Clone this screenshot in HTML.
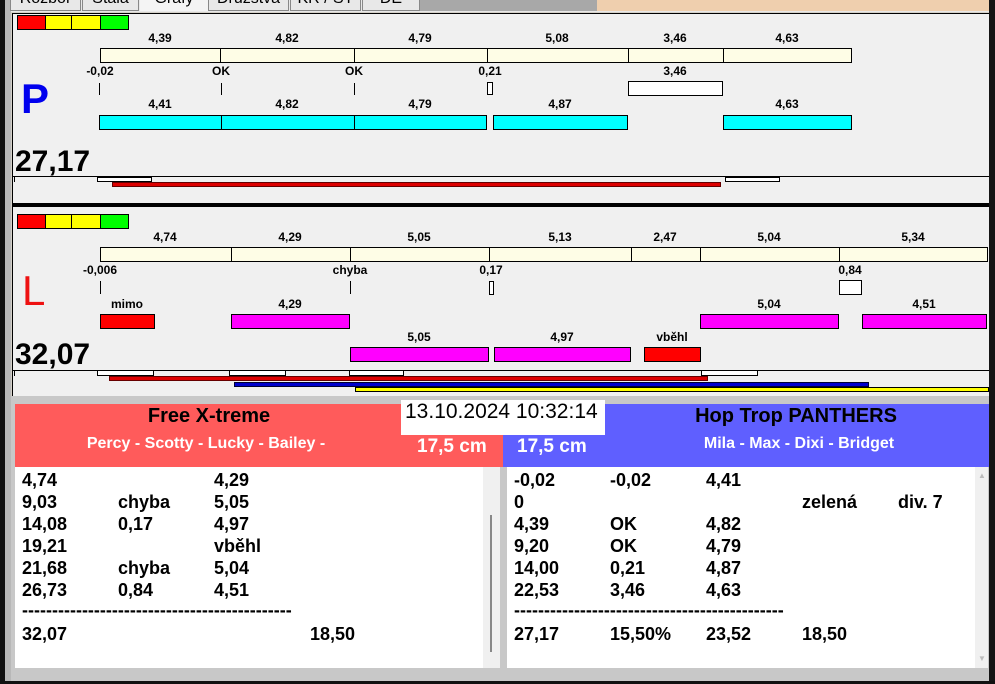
<!DOCTYPE html>
<html><head><meta charset="utf-8"><style>
*{margin:0;padding:0;box-sizing:border-box}
body{width:995px;height:684px;overflow:hidden;background:#d4d0c8;position:relative;font-family:"Liberation Sans",Arial,sans-serif;font-weight:bold}
div{position:absolute}
.t{font-size:12px;color:#000;text-align:center;width:80px;margin-left:-40px;line-height:14px}
.b{border:1px solid #000}
.y{background:#fefde6}
.c{background:#00ffff}
.m{background:#ff00ff}
.r{background:#ff0000}
.w{background:#fff}
.row{font-size:18px;line-height:22px;color:#000}
.tab{top:0;height:11px;background:#e8e8e8;border:1px solid #888;border-top:none;font-size:16px;font-weight:normal;overflow:hidden;text-align:center;line-height:10px}
</style></head><body>
<div style="left:0;top:0;width:5px;height:684px;background:#111"></div>
<div style="left:5px;top:0;width:6px;height:684px;background:#b8b8b8"></div>
<div style="left:989px;top:0;width:6px;height:684px;background:#151515"></div>
<div style="left:11px;top:0;width:978px;height:12px;background:#e8e8e8"></div>
<div style="left:420px;top:0;width:177px;height:11px;background:#a8a8a8"></div>
<div style="left:597px;top:0;width:392px;height:11px;background:#efcfae"></div>
<div class="tab" style="left:10px;width:71px"><span style="position:relative;top:-6px">Rozbor</span></div>
<div class="tab" style="left:82px;width:57px"><span style="position:relative;top:-6px">Stala</span></div>
<div class="tab" style="left:140px;width:68px;background:#f4f4f4;border:none"><span style="position:relative;top:-6px">Grafy</span></div>
<div class="tab" style="left:208px;width:81px"><span style="position:relative;top:-6px">Družstva</span></div>
<div class="tab" style="left:290px;width:71px"><span style="position:relative;top:-6px">KR / ST</span></div>
<div class="tab" style="left:362px;width:58px"><span style="position:relative;top:-6px">DE</span></div>

<div style="left:12px;top:13px;width:977px;height:192px;background:#f0f0f0;border-top:1px solid #000;border-left:1px solid #000"></div>
<div class="b r" style="left:17px;top:15px;width:29px;height:15px"></div>
<div class="b" style="left:45px;top:15px;width:27px;height:15px;background:#ffff00"></div>
<div class="b" style="left:71px;top:15px;width:30px;height:15px;background:#ffff00"></div>
<div class="b" style="left:100px;top:15px;width:29px;height:15px;background:#00ff00"></div>

<div class="t" style="left:160px;top:31px">4,39</div>
<div class="t" style="left:287px;top:31px">4,82</div>
<div class="t" style="left:420px;top:31px">4,79</div>
<div class="t" style="left:557px;top:31px">5,08</div>
<div class="t" style="left:675px;top:31px">3,46</div>
<div class="t" style="left:787px;top:31px">4,63</div>
<div class="b y" style="left:100px;top:48px;width:121px;height:15px"></div>
<div class="b y" style="left:220px;top:48px;width:135px;height:15px"></div>
<div class="b y" style="left:354px;top:48px;width:134px;height:15px"></div>
<div class="b y" style="left:487px;top:48px;width:142px;height:15px"></div>
<div class="b y" style="left:628px;top:48px;width:96px;height:15px"></div>
<div class="b y" style="left:723px;top:48px;width:129px;height:15px"></div>

<div class="t" style="left:100px;top:64px">-0,02</div>
<div class="t" style="left:221px;top:64px">OK</div>
<div class="t" style="left:354px;top:64px">OK</div>
<div class="t" style="left:490px;top:64px">0,21</div>
<div class="t" style="left:675px;top:64px">3,46</div>
<div style="left:99px;top:83px;width:1px;height:12px;background:#000"></div>
<div style="left:221px;top:83px;width:1px;height:12px;background:#000"></div>
<div style="left:354px;top:83px;width:1px;height:12px;background:#000"></div>
<div class="b w" style="left:487px;top:82px;width:6px;height:13px"></div>
<div class="b w" style="left:628px;top:81px;width:95px;height:15px"></div>

<div class="t" style="left:160px;top:97px">4,41</div>
<div class="t" style="left:287px;top:97px">4,82</div>
<div class="t" style="left:420px;top:97px">4,79</div>
<div class="t" style="left:560px;top:97px">4,87</div>
<div class="t" style="left:787px;top:97px">4,63</div>
<div class="b c" style="left:99px;top:115px;width:123px;height:15px"></div>
<div class="b c" style="left:221px;top:115px;width:134px;height:15px"></div>
<div class="b c" style="left:354px;top:115px;width:133px;height:15px"></div>
<div class="b c" style="left:493px;top:115px;width:135px;height:15px"></div>
<div class="b c" style="left:723px;top:115px;width:129px;height:15px"></div>

<div style="left:21px;top:76px;font-size:42px;color:#0000ee;line-height:46px">P</div>
<div style="left:15px;top:145px;font-size:30px;color:#000;line-height:34px">27,17</div>
<div style="left:12px;top:176px;width:977px;height:1px;background:#000"></div>
<div style="left:14px;top:177px;width:1px;height:5px;background:#000"></div>
<div class="b w" style="left:97px;top:177px;width:55px;height:5px"></div>
<div class="b w" style="left:725px;top:177px;width:55px;height:5px"></div>
<div style="left:112px;top:182px;width:609px;height:5px;background:#d00;border:1px solid #600"></div>
<div style="left:12px;top:203px;width:977px;height:4px;background:#000"></div>

<div style="left:12px;top:207px;width:977px;height:189px;background:#f0f0f0;border-left:1px solid #000"></div>
<div class="b r" style="left:17px;top:214px;width:29px;height:15px"></div>
<div class="b" style="left:45px;top:214px;width:27px;height:15px;background:#ffff00"></div>
<div class="b" style="left:71px;top:214px;width:30px;height:15px;background:#ffff00"></div>
<div class="b" style="left:100px;top:214px;width:29px;height:15px;background:#00ff00"></div>

<div class="t" style="left:165px;top:230px">4,74</div>
<div class="t" style="left:290px;top:230px">4,29</div>
<div class="t" style="left:419px;top:230px">5,05</div>
<div class="t" style="left:560px;top:230px">5,13</div>
<div class="t" style="left:665px;top:230px">2,47</div>
<div class="t" style="left:769px;top:230px">5,04</div>
<div class="t" style="left:913px;top:230px">5,34</div>
<div class="b y" style="left:100px;top:247px;width:132px;height:15px"></div>
<div class="b y" style="left:231px;top:247px;width:120px;height:15px"></div>
<div class="b y" style="left:350px;top:247px;width:140px;height:15px"></div>
<div class="b y" style="left:489px;top:247px;width:143px;height:15px"></div>
<div class="b y" style="left:631px;top:247px;width:70px;height:15px"></div>
<div class="b y" style="left:700px;top:247px;width:140px;height:15px"></div>
<div class="b y" style="left:839px;top:247px;width:149px;height:15px"></div>

<div class="t" style="left:100px;top:263px">-0,006</div>
<div class="t" style="left:350px;top:263px">chyba</div>
<div class="t" style="left:491px;top:263px">0,17</div>
<div class="t" style="left:850px;top:263px">0,84</div>
<div style="left:100px;top:281px;width:1px;height:13px;background:#000"></div>
<div style="left:350px;top:281px;width:1px;height:13px;background:#000"></div>
<div class="b w" style="left:489px;top:281px;width:5px;height:14px"></div>
<div class="b w" style="left:839px;top:280px;width:23px;height:15px"></div>

<div class="t" style="left:127px;top:297px">mimo</div>
<div class="t" style="left:290px;top:297px">4,29</div>
<div class="t" style="left:769px;top:297px">5,04</div>
<div class="t" style="left:924px;top:297px">4,51</div>
<div class="b r" style="left:100px;top:314px;width:55px;height:15px"></div>
<div class="b m" style="left:231px;top:314px;width:119px;height:15px"></div>
<div class="b m" style="left:700px;top:314px;width:139px;height:15px"></div>
<div class="b m" style="left:862px;top:314px;width:125px;height:15px"></div>

<div class="t" style="left:419px;top:330px">5,05</div>
<div class="t" style="left:562px;top:330px">4,97</div>
<div class="t" style="left:672px;top:330px">vběhl</div>
<div class="b m" style="left:350px;top:347px;width:139px;height:15px"></div>
<div class="b m" style="left:494px;top:347px;width:137px;height:15px"></div>
<div class="b r" style="left:644px;top:347px;width:57px;height:15px"></div>

<div style="left:22px;top:268px;font-size:42px;color:#ee1111;line-height:46px;font-weight:normal">L</div>
<div style="left:15px;top:338px;font-size:30px;color:#000;line-height:34px">32,07</div>
<div style="left:12px;top:370px;width:977px;height:1px;background:#000"></div>
<div style="left:14px;top:371px;width:1px;height:5px;background:#000"></div>
<div class="b w" style="left:97px;top:370px;width:57px;height:6px"></div>
<div class="b w" style="left:229px;top:370px;width:57px;height:6px"></div>
<div class="b w" style="left:349px;top:370px;width:55px;height:6px"></div>
<div class="b w" style="left:701px;top:370px;width:57px;height:6px"></div>
<div style="left:109px;top:376px;width:599px;height:5px;background:#d00;border:1px solid #600"></div>
<div style="left:234px;top:382px;width:635px;height:5px;background:#00c;border:1px solid #003"></div>
<div style="left:355px;top:387px;width:634px;height:5px;background:#ff0;border:1px solid #000"></div>

<div style="left:11px;top:396px;width:978px;height:285px;background:#c8c8c8"></div>
<div style="left:0;top:681px;width:995px;height:3px;background:#111"></div>
<div style="left:15px;top:404px;width:488px;height:63px;background:#ff5b5b"></div>
<div style="left:503px;top:404px;width:486px;height:63px;background:#5f5fff"></div>
<div style="left:401px;top:400px;width:204px;height:35px;background:#fff;font-weight:normal;font-size:21px;line-height:24px;padding:0 0 0 4px;white-space:nowrap">13.10.2024 10:32:14</div>
<div style="left:59px;top:405px;width:300px;text-align:center;font-size:20px;line-height:22px">Free X-treme</div>
<div style="left:56px;top:434px;width:300px;text-align:center;font-size:16px;line-height:20px;color:#fff">Percy - Scotty - Lucky - Bailey -</div>
<div style="left:417px;top:436px;font-size:19px;line-height:22px;color:#fff">17,5 cm</div>
<div style="left:517px;top:436px;font-size:19px;line-height:22px;color:#fff">17,5 cm</div>
<div style="left:646px;top:405px;width:300px;text-align:center;font-size:20px;line-height:22px">Hop Trop PANTHERS</div>
<div style="left:649px;top:434px;width:300px;text-align:center;font-size:16px;line-height:20px;color:#fff">Mila - Max - Dixi - Bridget</div>

<div style="left:15px;top:467px;width:468px;height:201px;background:#fff"></div>
<div style="left:483px;top:467px;width:17px;height:201px;background:#f0f0f0"></div>
<div style="left:490px;top:515px;width:2px;height:137px;background:#888"></div>
<div style="left:503px;top:467px;width:4px;height:201px;background:#c8c8c8"></div>
<div style="left:507px;top:467px;width:468px;height:201px;background:#fff"></div>
<div style="left:975px;top:467px;width:13px;height:201px;background:#f0f0f0"></div>
<div style="left:978px;top:471px;font-size:8px;color:#bbb">▲</div>
<div style="left:978px;top:654px;font-size:8px;color:#bbb">▼</div>

<div class="row" style="left:22px;top:469px">4,74<br>9,03<br>14,08<br>19,21<br>21,68<br>26,73</div>
<div class="row" style="left:118px;top:469px"><br>chyba<br>0,17<br><br>chyba<br>0,84</div>
<div class="row" style="left:214px;top:469px">4,29<br>5,05<br>4,97<br>vběhl<br>5,04<br>4,51</div>
<div class="row" style="left:22px;top:599px;width:270px;overflow:hidden;white-space:nowrap">-------------------------------------------------------</div>
<div class="row" style="left:22px;top:623px">32,07</div>
<div class="row" style="left:310px;top:623px">18,50</div>

<div class="row" style="left:514px;top:469px">-0,02<br>0<br>4,39<br>9,20<br>14,00<br>22,53</div>
<div class="row" style="left:610px;top:469px">-0,02<br><br>OK<br>OK<br>0,21<br>3,46</div>
<div class="row" style="left:706px;top:469px">4,41<br><br>4,82<br>4,79<br>4,87<br>4,63</div>
<div class="row" style="left:802px;top:491px">zelená</div>
<div class="row" style="left:898px;top:491px">div. 7</div>
<div class="row" style="left:514px;top:599px;width:270px;overflow:hidden;white-space:nowrap">-------------------------------------------------------</div>
<div class="row" style="left:514px;top:623px">27,17</div>
<div class="row" style="left:610px;top:623px">15,50%</div>
<div class="row" style="left:706px;top:623px">23,52</div>
<div class="row" style="left:802px;top:623px">18,50</div>
</body></html>
